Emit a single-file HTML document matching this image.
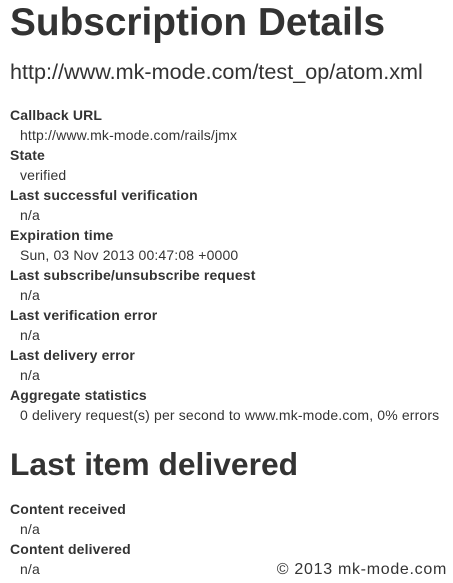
<!DOCTYPE html>
<html><head><meta charset="utf-8"><style>
body{margin:0;width:453px;height:583px;overflow:hidden;background:#fff;color:#333;font-family:"Liberation Sans",sans-serif;position:relative}
h1{position:absolute;left:10px;top:0;margin:0;font-size:38.8px;line-height:46px;font-weight:bold;white-space:nowrap}
.url{position:absolute;left:10px;top:57px;font-size:21.6px;line-height:30px;white-space:nowrap}
h2{position:absolute;left:10px;top:444px;margin:0;font-size:31.8px;line-height:40px;font-weight:bold;white-space:nowrap}
dl{position:absolute;left:10px;margin:0;font-size:14px;line-height:20px;letter-spacing:0.15px}
dt{font-weight:bold}
dd{margin:0 0 0 10px;white-space:nowrap}
.foot{position:absolute;right:6px;top:560px;font-size:16px;line-height:20px;letter-spacing:0.7px}
</style></head><body>
<h1>Subscription Details</h1>
<div class="url">http://www.mk-mode.com/test_op/atom.xml</div>
<dl style="top:105px">
<dt>Callback URL</dt><dd>http://www.mk-mode.com/rails/jmx</dd>
<dt>State</dt><dd>verified</dd>
<dt>Last successful verification</dt><dd>n/a</dd>
<dt>Expiration time</dt><dd>Sun, 03 Nov 2013 00:47:08 +0000</dd>
<dt>Last subscribe/unsubscribe request</dt><dd>n/a</dd>
<dt>Last verification error</dt><dd>n/a</dd>
<dt>Last delivery error</dt><dd>n/a</dd>
<dt>Aggregate statistics</dt><dd>0 delivery request(s) per second to www.mk-mode.com, 0% errors</dd>
</dl>
<h2>Last item delivered</h2>
<dl style="top:499px">
<dt>Content received</dt><dd>n/a</dd>
<dt>Content delivered</dt><dd>n/a</dd>
</dl>
<div class="foot">© 2013 mk-mode.com</div>
</body></html>
